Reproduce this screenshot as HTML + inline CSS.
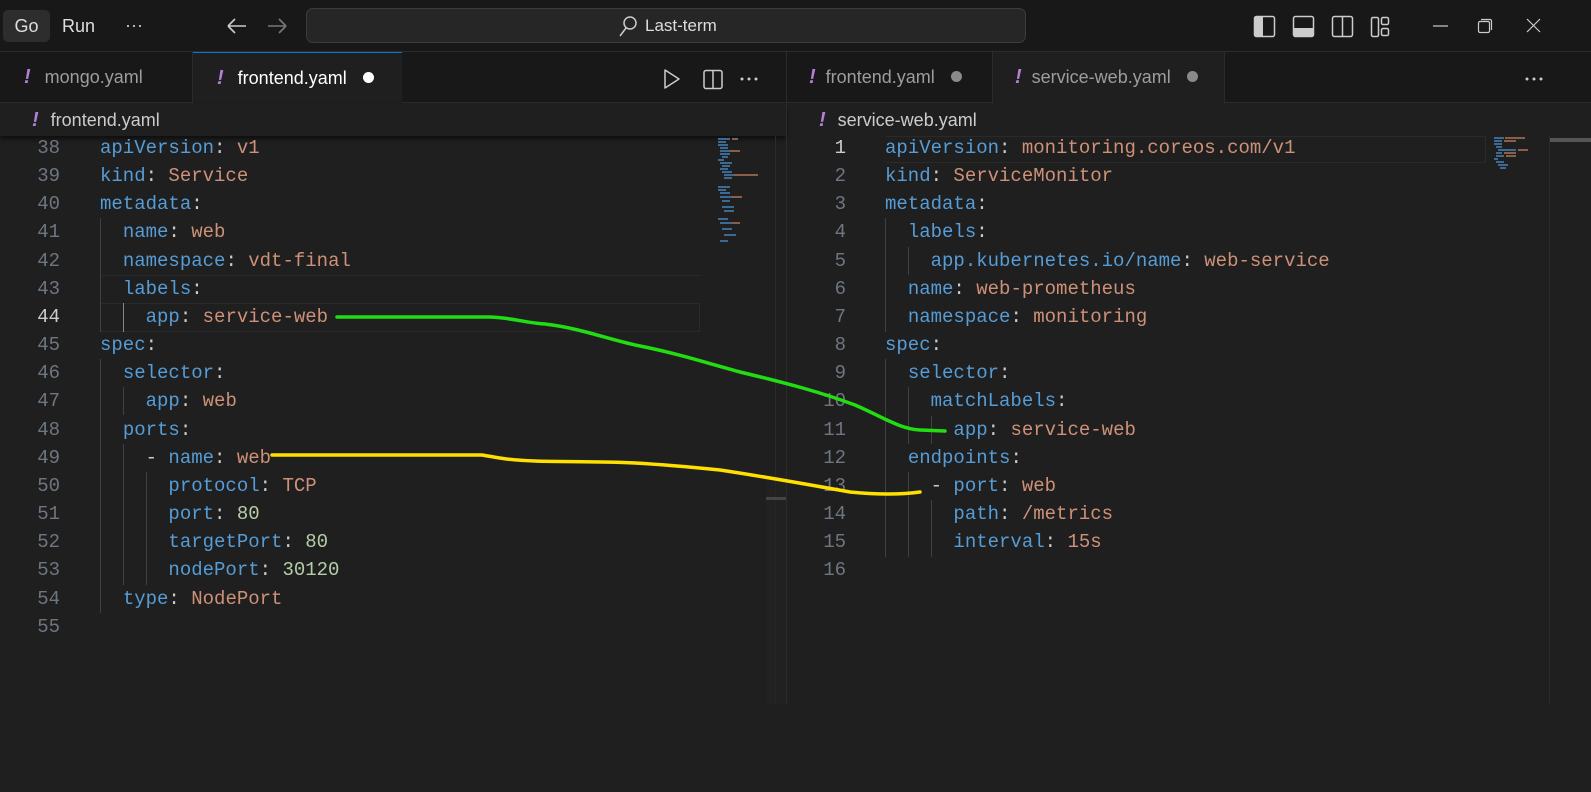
<!DOCTYPE html>
<html><head><meta charset="utf-8"><style>
*{margin:0;padding:0;box-sizing:border-box}
body{width:1591px;height:704px;background:#1f1f1f;overflow:hidden;position:relative;font-family:"Liberation Sans",sans-serif;color:#ccc}
.abs{position:absolute}
.title{left:0;top:0;width:1591px;height:52px;background:#181818;border-bottom:1px solid #2b2b2b}
.tabs{top:52px;height:51px;background:#181818;border-bottom:1px solid #2b2b2b}
.tab{position:absolute;top:0;height:51px;font-size:18px;line-height:51px;color:#9d9d9d}
.ex{color:#b180d7;font-style:italic;font-weight:bold;margin-right:14px;font-size:20px}
.code{font-family:"Liberation Mono","DejaVu Sans Mono",monospace;font-size:19px;white-space:pre}
.ln{position:absolute;text-align:right;width:40px;color:#6e7681;font-family:"Liberation Mono",monospace;font-size:19px;height:28px;line-height:28px}
.l{position:absolute;height:28px;line-height:28px}
.k{color:#569cd6}.s{color:#ce9178}.n{color:#b5cea8}.p{color:#ccc}
.g{position:absolute;width:1px;background:#404040}
</style></head><body>
<div class="abs title">
 <div class="abs" style="left:3px;top:10px;width:47px;height:32px;background:#2d2d2d;border-radius:5px;font-size:18px;line-height:32px;text-align:center;color:#ddd">Go</div>
 <div class="abs" style="left:62px;top:10px;font-size:18px;line-height:32px;color:#ddd">Run</div>
 <div class="abs" style="left:125px;top:10px;font-size:18px;line-height:30px;color:#ccc">···</div>
 <svg class="abs" style="left:224px;top:15px" width="70" height="22"><path d="M4 11H22M4 11L11 4M4 11L11 18" stroke="#ccc" stroke-width="1.6" fill="none"/><path d="M44 11H62M62 11L55 4M62 11L55 18" stroke="#777" stroke-width="1.6" fill="none"/></svg>
 <div class="abs" style="left:306px;top:8px;width:720px;height:35px;background:#262626;border:1px solid #3c3c3c;border-radius:7px"></div>
 <svg class="abs" style="left:617px;top:15px" width="24" height="24"><circle cx="13" cy="8" r="6" stroke="#ccc" stroke-width="1.5" fill="none"/><path d="M9 13L3 21" stroke="#ccc" stroke-width="1.5"/></svg>
 <div class="abs" style="left:645px;top:8px;font-size:17px;line-height:35px;color:#ddd">Last-term</div>
 <svg class="abs" style="left:1250px;top:12px" width="320" height="30">
  <rect x="4.5" y="4.5" width="20" height="20" rx="2" stroke="#ccc" stroke-width="1.5" fill="none"/><rect x="5" y="5" width="8" height="19" fill="#ccc"/>
  <rect x="43.5" y="4.5" width="20" height="20" rx="2" stroke="#ccc" stroke-width="1.5" fill="none"/><rect x="44" y="16" width="19" height="8" fill="#ccc"/>
  <rect x="82.5" y="4.5" width="20" height="20" rx="2" stroke="#ccc" stroke-width="1.5" fill="none"/><path d="M92.5 5V24" stroke="#ccc" stroke-width="1.5"/>
  <rect x="121.5" y="5.5" width="7" height="19" rx="1.5" stroke="#ccc" stroke-width="1.5" fill="none"/><rect x="131.5" y="5.5" width="7" height="7" rx="1.5" stroke="#ccc" stroke-width="1.5" fill="none"/><rect x="131.5" y="16.5" width="7" height="7" rx="1.5" stroke="#ccc" stroke-width="1.5" fill="none"/>
  <path d="M183 14H198" stroke="#ccc" stroke-width="1.2"/>
  <rect x="228.5" y="9.5" width="11" height="11" rx="1.5" stroke="#ccc" stroke-width="1.2" fill="none"/><path d="M231 7.5H240a1.5 1.5 0 0 1 1.5 1.5V18" stroke="#ccc" stroke-width="1.2" fill="none"/>
  <path d="M277 7L290 20M290 7L277 20" stroke="#ccc" stroke-width="1.2"/>
 </svg>
</div>
<!-- left tabs -->
<div class="abs tabs" style="left:0;width:786px">
 <div class="tab" style="left:0;width:193px;padding-left:24px;border-right:1px solid #2b2b2b"><span class="ex">!</span>mongo.yaml</div>
 <div class="tab" style="left:193px;width:209px;padding-left:24px;background:#1f1f1f;border-top:1px solid #0078d4;height:52px;color:#fff"><span class="ex">!</span>frontend.yaml<span style="display:inline-block;width:11px;height:11px;border-radius:50%;background:#fff;margin-left:16px;vertical-align:1px"></span></div>
 <svg class="abs" style="left:660px;top:15px" width="110" height="24"><path d="M5 3L19 12L5 21Z" stroke="#ccc" stroke-width="1.5" fill="none" stroke-linejoin="round"/><rect x="44" y="3.5" width="18" height="18" rx="2" stroke="#ccc" stroke-width="1.5" fill="none"/><path d="M53 4V21" stroke="#ccc" stroke-width="1.5"/><circle cx="82" cy="12" r="1.5" fill="#ccc"/><circle cx="89" cy="12" r="1.5" fill="#ccc"/><circle cx="96" cy="12" r="1.5" fill="#ccc"/></svg>
</div>
<div class="abs tabs" style="left:786px;width:805px;border-left:1px solid #2b2b2b">
 <div class="tab" style="left:0;width:206px;padding-left:22px;border-right:1px solid #2b2b2b"><span class="ex" style="margin-right:10px">!</span>frontend.yaml<span style="display:inline-block;width:11px;height:11px;border-radius:50%;background:#8a8a8a;margin-left:16px;vertical-align:1px"></span></div>
 <div class="tab" style="left:206px;width:232px;padding-left:22px;background:#1f1f1f;height:52px;border-right:1px solid #2b2b2b"><span class="ex" style="margin-right:10px">!</span>service-web.yaml<span style="display:inline-block;width:11px;height:11px;border-radius:50%;background:#8a8a8a;margin-left:16px;vertical-align:1px"></span></div>
 <svg class="abs" style="left:735px;top:15px" width="30" height="24"><circle cx="5" cy="12" r="1.5" fill="#ccc"/><circle cx="12" cy="12" r="1.5" fill="#ccc"/><circle cx="19" cy="12" r="1.5" fill="#ccc"/></svg>
</div>
<!-- breadcrumbs -->
<div class="abs" style="left:0;top:104px;width:786px;height:32px;font-size:18px;line-height:32px;padding-left:32px;color:#ccc;box-shadow:0 3px 4px #0008"><span class="ex" style="margin-right:12px">!</span>frontend.yaml</div>
<div class="abs" style="left:787px;top:104px;width:804px;height:32px;font-size:18px;line-height:32px;padding-left:32px;color:#ccc"><span class="ex" style="margin-right:12px">!</span>service-web.yaml</div>
<div class="abs" style="left:786px;top:52px;width:1px;height:652px;background:#2b2b2b"></div>

<!-- left code -->
<div class="abs" style="left:100px;top:303px;width:600px;height:29px;border:1px solid #2a2a2a;border-left:none"></div>
<div class="abs" style="left:100px;top:275px;width:600px;height:1px;background:#2a2a2a"></div>
<div class="g" style="left:100px;top:218px;height:114px"></div>
<div class="g" style="left:100px;top:359px;height:254px"></div>
<div class="g" style="left:123px;top:303px;height:29px;background:#888"></div>
<div class="g" style="left:123px;top:387px;height:28px"></div>
<div class="g" style="left:123px;top:444px;height:141px"></div>
<div class="g" style="left:146px;top:472px;height:113px"></div>
<div class="code">
<div class="ln" style="left:20px;top:134px">38</div><div class="l" style="left:100px;top:134px"><span class="k">apiVersion</span><span class="p">: </span><span class="s">v1</span></div>
<div class="ln" style="left:20px;top:162px">39</div><div class="l" style="left:100px;top:162px"><span class="k">kind</span><span class="p">: </span><span class="s">Service</span></div>
<div class="ln" style="left:20px;top:190px">40</div><div class="l" style="left:100px;top:190px"><span class="k">metadata</span><span class="p">:</span></div>
<div class="ln" style="left:20px;top:218px">41</div><div class="l" style="left:100px;top:218px">  <span class="k">name</span><span class="p">: </span><span class="s">web</span></div>
<div class="ln" style="left:20px;top:247px">42</div><div class="l" style="left:100px;top:247px">  <span class="k">namespace</span><span class="p">: </span><span class="s">vdt-final</span></div>
<div class="ln" style="left:20px;top:275px">43</div><div class="l" style="left:100px;top:275px">  <span class="k">labels</span><span class="p">:</span></div>
<div class="ln" style="left:20px;top:303px;color:#ccc">44</div><div class="l" style="left:100px;top:303px">    <span class="k">app</span><span class="p">: </span><span class="s">service-web</span></div>
<div class="ln" style="left:20px;top:331px">45</div><div class="l" style="left:100px;top:331px"><span class="k">spec</span><span class="p">:</span></div>
<div class="ln" style="left:20px;top:359px">46</div><div class="l" style="left:100px;top:359px">  <span class="k">selector</span><span class="p">:</span></div>
<div class="ln" style="left:20px;top:387px">47</div><div class="l" style="left:100px;top:387px">    <span class="k">app</span><span class="p">: </span><span class="s">web</span></div>
<div class="ln" style="left:20px;top:416px">48</div><div class="l" style="left:100px;top:416px">  <span class="k">ports</span><span class="p">:</span></div>
<div class="ln" style="left:20px;top:444px">49</div><div class="l" style="left:100px;top:444px">    <span class="p">- </span><span class="k">name</span><span class="p">: </span><span class="s">web</span></div>
<div class="ln" style="left:20px;top:472px">50</div><div class="l" style="left:100px;top:472px">      <span class="k">protocol</span><span class="p">: </span><span class="s">TCP</span></div>
<div class="ln" style="left:20px;top:500px">51</div><div class="l" style="left:100px;top:500px">      <span class="k">port</span><span class="p">: </span><span class="n">80</span></div>
<div class="ln" style="left:20px;top:528px">52</div><div class="l" style="left:100px;top:528px">      <span class="k">targetPort</span><span class="p">: </span><span class="n">80</span></div>
<div class="ln" style="left:20px;top:556px">53</div><div class="l" style="left:100px;top:556px">      <span class="k">nodePort</span><span class="p">: </span><span class="n">30120</span></div>
<div class="ln" style="left:20px;top:585px">54</div><div class="l" style="left:100px;top:585px">  <span class="k">type</span><span class="p">: </span><span class="s">NodePort</span></div>
<div class="ln" style="left:20px;top:613px">55</div>
</div>
<!-- left minimap -->
<svg class="abs" style="left:706px;top:136px" width="60" height="110">
 <g fill="#3d6a92"><rect x="12" y="2" width="12" height="2"/><rect x="12" y="5" width="8" height="2"/><rect x="12" y="8" width="10" height="2"/><rect x="14" y="11" width="8" height="2"/><rect x="14" y="14" width="14" height="2"/><rect x="14" y="17" width="10" height="2"/><rect x="16" y="20" width="6" height="2"/><rect x="12" y="23" width="6" height="2"/><rect x="14" y="26" width="12" height="2"/><rect x="16" y="29" width="8" height="2"/><rect x="14" y="32" width="8" height="2"/><rect x="16" y="35" width="10" height="2"/><rect x="18" y="38" width="12" height="2"/><rect x="18" y="41" width="8" height="2"/><rect x="12" y="50" width="12" height="2"/><rect x="12" y="53" width="8" height="2"/><rect x="14" y="56" width="10" height="2"/><rect x="14" y="60" width="14" height="2"/><rect x="16" y="64" width="8" height="2"/><rect x="16" y="70" width="12" height="2"/><rect x="18" y="74" width="10" height="2"/><rect x="12" y="82" width="10" height="2"/><rect x="14" y="86" width="14" height="2"/><rect x="16" y="92" width="10" height="2"/><rect x="18" y="98" width="12" height="2"/><rect x="14" y="104" width="8" height="2"/></g>
 <g fill="#8a5e4a"><rect x="26" y="2" width="6" height="2"/><rect x="24" y="14" width="10" height="2"/><rect x="28" y="38" width="24" height="2"/><rect x="26" y="60" width="10" height="2"/><rect x="26" y="86" width="8" height="2"/></g>
</svg>
<div class="abs" style="left:775px;top:136px;width:1px;height:568px;background:#2b2b2b"></div>
<div class="abs" style="left:766px;top:497px;width:20px;height:3px;background:#777"></div>
<div class="abs" style="left:766px;top:475px;width:20px;height:229px;background:#232323;opacity:.6"></div>

<!-- right code -->
<div class="abs" style="left:886px;top:136px;width:600px;height:27px;border:1px solid #2a2a2a;border-left:none"></div>
<div class="g" style="left:885px;top:218px;height:114px"></div>
<div class="g" style="left:885px;top:359px;height:198px"></div>
<div class="g" style="left:908px;top:247px;height:28px"></div>
<div class="g" style="left:908px;top:387px;height:57px"></div>
<div class="g" style="left:908px;top:472px;height:85px"></div>
<div class="g" style="left:931px;top:416px;height:28px"></div>
<div class="g" style="left:931px;top:500px;height:57px"></div>
<div class="code">
<div class="ln" style="left:806px;top:134px;color:#ccc">1</div><div class="l" style="left:885px;top:134px"><span class="k">apiVersion</span><span class="p">: </span><span class="s">monitoring.coreos.com/v1</span></div>
<div class="ln" style="left:806px;top:162px">2</div><div class="l" style="left:885px;top:162px"><span class="k">kind</span><span class="p">: </span><span class="s">ServiceMonitor</span></div>
<div class="ln" style="left:806px;top:190px">3</div><div class="l" style="left:885px;top:190px"><span class="k">metadata</span><span class="p">:</span></div>
<div class="ln" style="left:806px;top:218px">4</div><div class="l" style="left:885px;top:218px">  <span class="k">labels</span><span class="p">:</span></div>
<div class="ln" style="left:806px;top:247px">5</div><div class="l" style="left:885px;top:247px">    <span class="k">app.kubernetes.io/name</span><span class="p">: </span><span class="s">web-service</span></div>
<div class="ln" style="left:806px;top:275px">6</div><div class="l" style="left:885px;top:275px">  <span class="k">name</span><span class="p">: </span><span class="s">web-prometheus</span></div>
<div class="ln" style="left:806px;top:303px">7</div><div class="l" style="left:885px;top:303px">  <span class="k">namespace</span><span class="p">: </span><span class="s">monitoring</span></div>
<div class="ln" style="left:806px;top:331px">8</div><div class="l" style="left:885px;top:331px"><span class="k">spec</span><span class="p">:</span></div>
<div class="ln" style="left:806px;top:359px">9</div><div class="l" style="left:885px;top:359px">  <span class="k">selector</span><span class="p">:</span></div>
<div class="ln" style="left:806px;top:387px">10</div><div class="l" style="left:885px;top:387px">    <span class="k">matchLabels</span><span class="p">:</span></div>
<div class="ln" style="left:806px;top:416px">11</div><div class="l" style="left:885px;top:416px">      <span class="k">app</span><span class="p">: </span><span class="s">service-web</span></div>
<div class="ln" style="left:806px;top:444px">12</div><div class="l" style="left:885px;top:444px">  <span class="k">endpoints</span><span class="p">:</span></div>
<div class="ln" style="left:806px;top:472px">13</div><div class="l" style="left:885px;top:472px">    <span class="p">- </span><span class="k">port</span><span class="p">: </span><span class="s">web</span></div>
<div class="ln" style="left:806px;top:500px">14</div><div class="l" style="left:885px;top:500px">      <span class="k">path</span><span class="p">: </span><span class="s">/metrics</span></div>
<div class="ln" style="left:806px;top:528px">15</div><div class="l" style="left:885px;top:528px">      <span class="k">interval</span><span class="p">: </span><span class="s">15s</span></div>
<div class="ln" style="left:806px;top:556px">16</div>
</div>
<svg class="abs" style="left:1490px;top:136px" width="50" height="35">
 <g fill="#3d6a92"><rect x="4" y="1" width="10" height="2"/><rect x="4" y="4" width="8" height="2"/><rect x="4" y="7" width="8" height="2"/><rect x="6" y="10" width="6" height="2"/><rect x="8" y="13" width="18" height="2"/><rect x="6" y="16" width="6" height="2"/><rect x="6" y="19" width="8" height="2"/><rect x="4" y="22" width="4" height="2"/><rect x="6" y="25" width="8" height="2"/><rect x="8" y="28" width="10" height="2"/><rect x="10" y="31" width="6" height="2"/></g>
 <g fill="#8a5e4a"><rect x="15" y="1" width="20" height="2"/><rect x="14" y="4" width="12" height="2"/><rect x="28" y="13" width="10" height="2"/><rect x="14" y="16" width="12" height="2"/><rect x="16" y="19" width="10" height="2"/></g>
</svg>
<div class="abs" style="left:1549px;top:136px;width:1px;height:568px;background:#2b2b2b"></div>
<div class="abs" style="left:1550px;top:138px;width:41px;height:4px;background:#555"></div>

<!-- annotations -->
<svg class="abs" style="left:0;top:0" width="1591" height="704">
 <path d="M337 317 L490 317 C515 318 525 323 545 324 C580 328 610 340 640 346 C680 354 710 364 740 372 C790 384 820 392 855 405 C885 418 900 429 920 430 L945 431" stroke="#22dd11" stroke-width="3.5" fill="none" stroke-linecap="round"/>
 <path d="M272 455 L482 455 C495 457 505 460 535 461 C560 462 600 461 635 463 C670 465 700 468 720 470 C760 476 800 483 850 492 C880 495 905 494 920 492" stroke="#ffe000" stroke-width="3.5" fill="none" stroke-linecap="round"/>
</svg>
</body></html>
